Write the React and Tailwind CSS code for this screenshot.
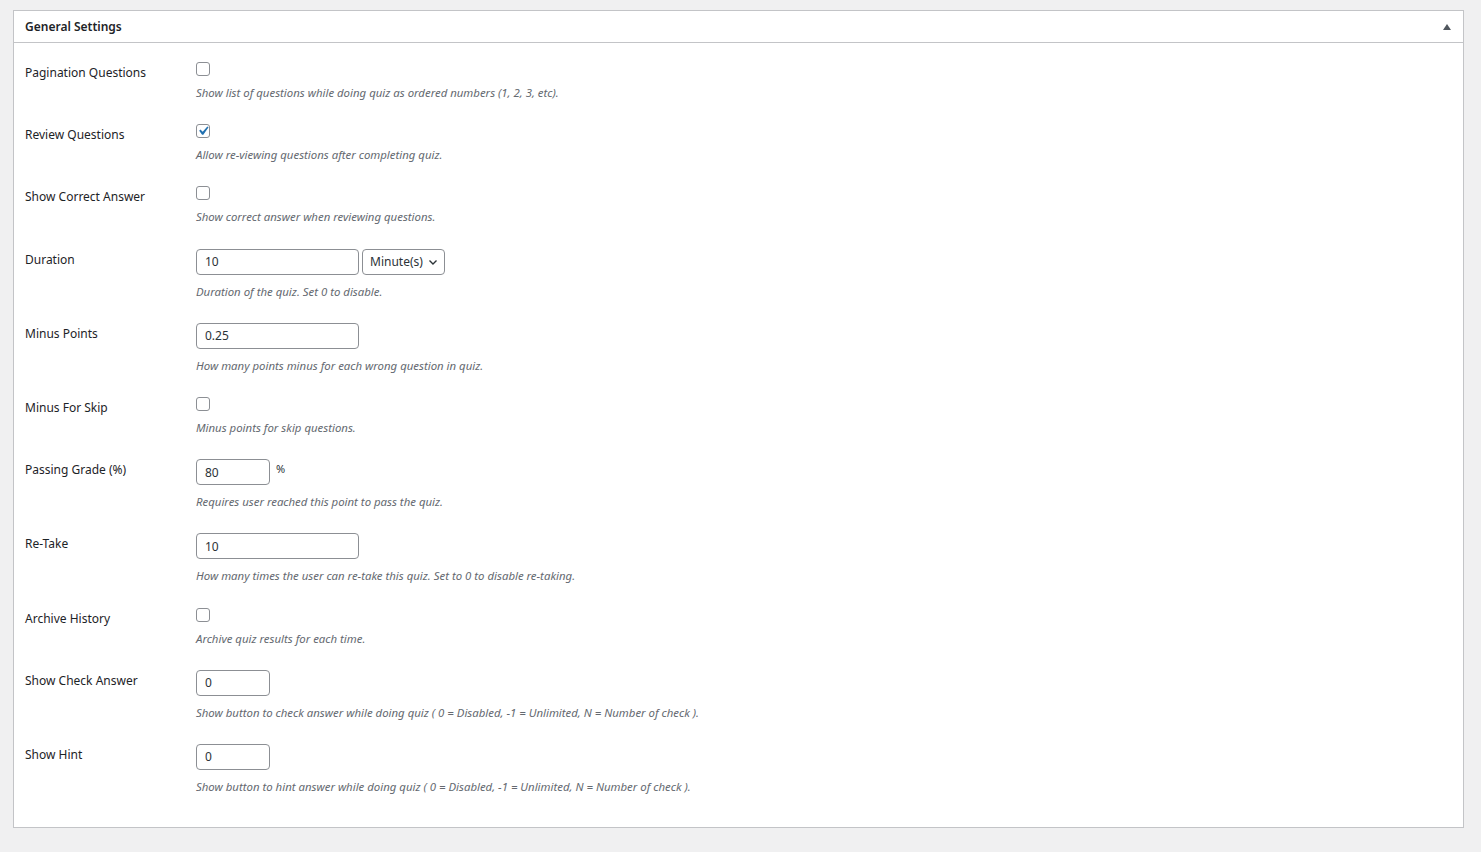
import React, { useState } from "react";

const font = { fontFamily: '"Noto Sans", "Open Sans", sans-serif' };

function Checkbox({ checked, onChange }) {
  return (
    <button
      type="button"
      onClick={onChange}
      className="relative w-[14px] h-[14px] border border-[#8c8f94] rounded-[3px] bg-white block"
    >
      {checked && (
        <svg width="18" height="18" viewBox="0 0 20 20" className="absolute -left-[3px] -top-[3px]">
          <path d="M14.83 4.89l1.34.94-5.81 8.38H9.02L5.78 9.67l1.34-1.25 2.57 2.4z" fill="#2271b1" />
        </svg>
      )}
    </button>
  );
}

function TextInput({ value, width }) {
  return (
    <input
      type="text"
      defaultValue={value}
      className={`${width} h-[26px] border border-[#8c8f94] rounded-[4px] px-2 text-[12px] text-[#2c3338] bg-white outline-none`}
    />
  );
}

function Row({ label, desc, children }) {
  return (
    <div className="flex pt-[19px] pb-[3.2px]">
      <div className="w-[171px] shrink-0 pt-[1px] text-[12px] leading-5 text-[#1d2327]">{label}</div>
      <div>
        <div className="flex items-start">{children}</div>
        <p className="mt-[8px] text-[11.4px] leading-[18px] italic text-[#646970]">{desc}</p>
      </div>
    </div>
  );
}

export default function App() {
  const [checks, setChecks] = useState({
    pagination: false,
    review: true,
    correct: false,
    skip: false,
    archive: false
  });

  const toggle = (k) => setChecks({ ...checks, [k]: !checks[k] });

  return (
    <div className="min-h-screen bg-[#f0f0f1] pt-[10px] pl-[13px] pr-[17px] pb-6" style={font}>
      <div className="bg-white border border-[#c3c4c7]">
        {/* Header */}
        <div className="h-[32px] flex items-center justify-between pl-[11px] pr-[12px] border-b border-[#c3c4c7]">
          <h2 className="text-[12px] font-semibold text-[#1d2327]">General Settings</h2>
          <svg width="8" height="6" viewBox="0 0 8 6">
            <path d="M4 0L8 6H0z" fill="#50575e" />
          </svg>
        </div>

        {/* Rows */}
        <div className="pl-[11px] pb-[28px]">
          <Row label="Pagination Questions" desc="Show list of questions while doing quiz as ordered numbers (1, 2, 3, etc).">
            <Checkbox checked={checks.pagination} onChange={() => toggle("pagination")} />
          </Row>
          <Row label="Review Questions" desc="Allow re-viewing questions after completing quiz.">
            <Checkbox checked={checks.review} onChange={() => toggle("review")} />
          </Row>
          <Row label="Show Correct Answer" desc="Show correct answer when reviewing questions.">
            <Checkbox checked={checks.correct} onChange={() => toggle("correct")} />
          </Row>
          <Row label="Duration" desc="Duration of the quiz. Set 0 to disable.">
            <TextInput value="10" width="w-[163px]" />
            <div className="ml-[3px] h-[26px] w-[83px] border border-[#8c8f94] rounded-[4px] flex items-center justify-between pl-[7px] pr-[6px] text-[12px] text-[#2c3338]">
              <span>Minute(s)</span>
              <svg width="10" height="10" viewBox="0 0 10 10">
                <path d="M1.5 3.5L5 7l3.5-3.5" stroke="#2c3338" strokeWidth="1.4" fill="none" />
              </svg>
            </div>
          </Row>
          <Row label="Minus Points" desc="How many points minus for each wrong question in quiz.">
            <TextInput value="0.25" width="w-[163px]" />
          </Row>
          <Row label="Minus For Skip" desc="Minus points for skip questions.">
            <Checkbox checked={checks.skip} onChange={() => toggle("skip")} />
          </Row>
          <Row label="Passing Grade (%)" desc="Requires user reached this point to pass the quiz.">
            <TextInput value="80" width="w-[74px]" />
            <span className="ml-[6px] mt-[2px] text-[11px] leading-4 text-[#2c3338]">%</span>
          </Row>
          <Row label="Re-Take" desc="How many times the user can re-take this quiz. Set to 0 to disable re-taking.">
            <TextInput value="10" width="w-[163px]" />
          </Row>
          <Row label="Archive History" desc="Archive quiz results for each time.">
            <Checkbox checked={checks.archive} onChange={() => toggle("archive")} />
          </Row>
          <Row label="Show Check Answer" desc="Show button to check answer while doing quiz ( 0 = Disabled, -1 = Unlimited, N = Number of check ).">
            <TextInput value="0" width="w-[74px]" />
          </Row>
          <Row label="Show Hint" desc="Show button to hint answer while doing quiz ( 0 = Disabled, -1 = Unlimited, N = Number of check ).">
            <TextInput value="0" width="w-[74px]" />
          </Row>
        </div>
      </div>
    </div>
  );
}
